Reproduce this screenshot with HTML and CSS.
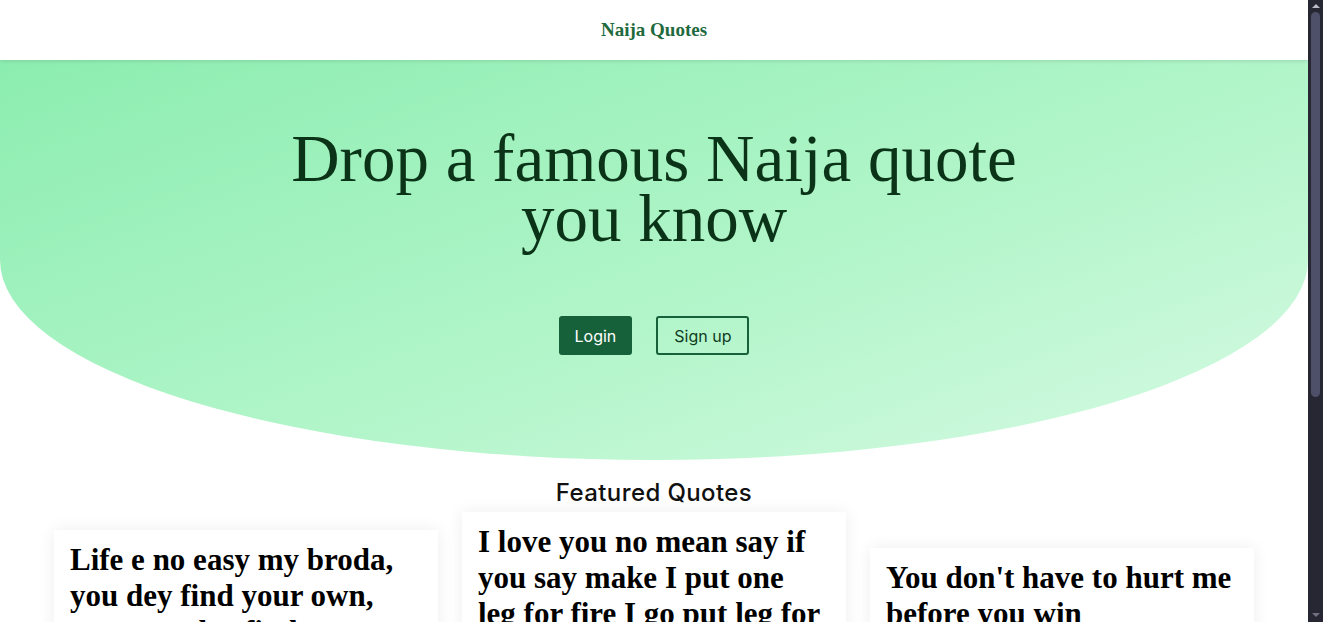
FILE: index.html
```html
<!DOCTYPE html>
<html lang="en">
<head>
<meta charset="utf-8">
<title>Naija Quotes</title>
<link rel="stylesheet" href="styles.css">
</head>
<body>
<header class="nav">
  <span class="brand">Naija Quotes</span>
</header>
<section class="hero">
  <h1 class="hero-title">Drop a famous Naija quote<br>you know</h1>
  <div class="hero-actions">
    <button class="btn btn-solid">Login</button>
    <button class="btn btn-outline">Sign up</button>
  </div>
</section>
<section class="featured">
  <h2 class="featured-title">Featured Quotes</h2>
  <div class="cards">
    <article class="card">
      <p class="quote">Life e no easy my broda, you dey find your own, na&nbsp;so we dey find am</p>
      <p class="author">— Anonymous</p>
    </article>
    <article class="card">
      <p class="quote">I love you no mean say if you say make I put one leg&nbsp;for fire I go put leg for fire o</p>
      <p class="author">— Anonymous</p>
    </article>
    <article class="card">
      <p class="quote">You don't have to hurt me before you win</p>
      <p class="author">— Anonymous</p>
    </article>
  </div>
</section>
<div class="scrollbar" aria-hidden="true">
  <span class="sb-arrow sb-up"></span>
  <span class="sb-thumb"></span>
  <span class="sb-arrow sb-down"></span>
</div>
</body>
</html>
```
FILE: styles.css
```css
* {
  box-sizing: border-box;
}
body {
  margin: 0 15px 0 0;
  background: #ffffff;
  font-family: "Liberation Serif", serif;
}
.nav {
  height: 60px;
  display: flex;
  align-items: center;
  justify-content: center;
  background: #fff;
  box-shadow: 0 1px 4px rgba(0, 0, 0, 0.12);
  position: relative;
  z-index: 1;
}
.brand {
  font-family: "Liberation Serif", serif;
  font-weight: 700;
  font-size: 19px;
  color: #1f6a3d;
}
.hero {
  height: 400px;
  background: linear-gradient(160deg, #8cedb0 0%, #b1f5c9 55%, #d6fae3 100%);
  border-radius: 0 0 50% 50% / 0 0 50% 50%;
  padding-top: 68px;
  text-align: center;
}
.hero-title {
  margin: 0;
  font-family: "Liberation Serif", serif;
  font-weight: 400;
  font-size: 67px;
  line-height: 60px;
  color: #0b3318;
}
.hero-actions {
  margin-top: 68px;
  display: flex;
  justify-content: center;
  gap: 24px;
}
.btn {
  font-family: "Inter", sans-serif;
  font-size: 16px;
  height: 39px;
  border-radius: 3px;
  padding: 0 16px;
  cursor: pointer;
}
.btn-solid {
  background: #17613a;
  color: #fff;
  border: none;
}
.btn-outline {
  background: transparent;
  color: #0f3d22;
  border: 2px solid #17613a;
}
.featured {
  padding-top: 16px;
}
.featured-title {
  margin: 0 0 3px;
  text-align: center;
  font-family: "Inter", sans-serif;
  font-weight: 500;
  font-size: 24px;
  letter-spacing: 0.4px;
  line-height: 33px;
  color: #111;
}
.cards {
  display: flex;
  justify-content: center;
  align-items: center;
  gap: 24px;
  padding-bottom: 40px;
}
.card {
  width: 384px;
  background: #fff;
  box-shadow: 0 0 16px rgba(0, 0, 0, 0.07);
  padding: 12px 16px 16px;
}
.quote {
  margin: 0;
  font-family: "Liberation Serif", serif;
  font-weight: 700;
  font-size: 31px;
  line-height: 36px;
  color: #000;
}
.author {
  margin: 12px 0 0;
  font-family: "Inter", sans-serif;
  font-size: 14px;
  color: #555;
}
.scrollbar {
  position: fixed;
  top: 0;
  right: 0;
  width: 15px;
  height: 100vh;
  background: #262733;
  display: flex;
  flex-direction: column;
  align-items: center;
}
.sb-arrow {
  width: 0;
  height: 0;
  border-left: 4px solid transparent;
  border-right: 4px solid transparent;
}
.sb-up {
  margin-top: 4px;
  border-bottom: 4px solid #b9bbc6;
}
.sb-thumb {
  margin-top: 4px;
  width: 9px;
  height: 385px;
  background: #4d5068;
  border-radius: 5px;
}
.sb-down {
  margin-top: auto;
  margin-bottom: 5px;
  border-top: 4px solid #6f7183;
}
```
